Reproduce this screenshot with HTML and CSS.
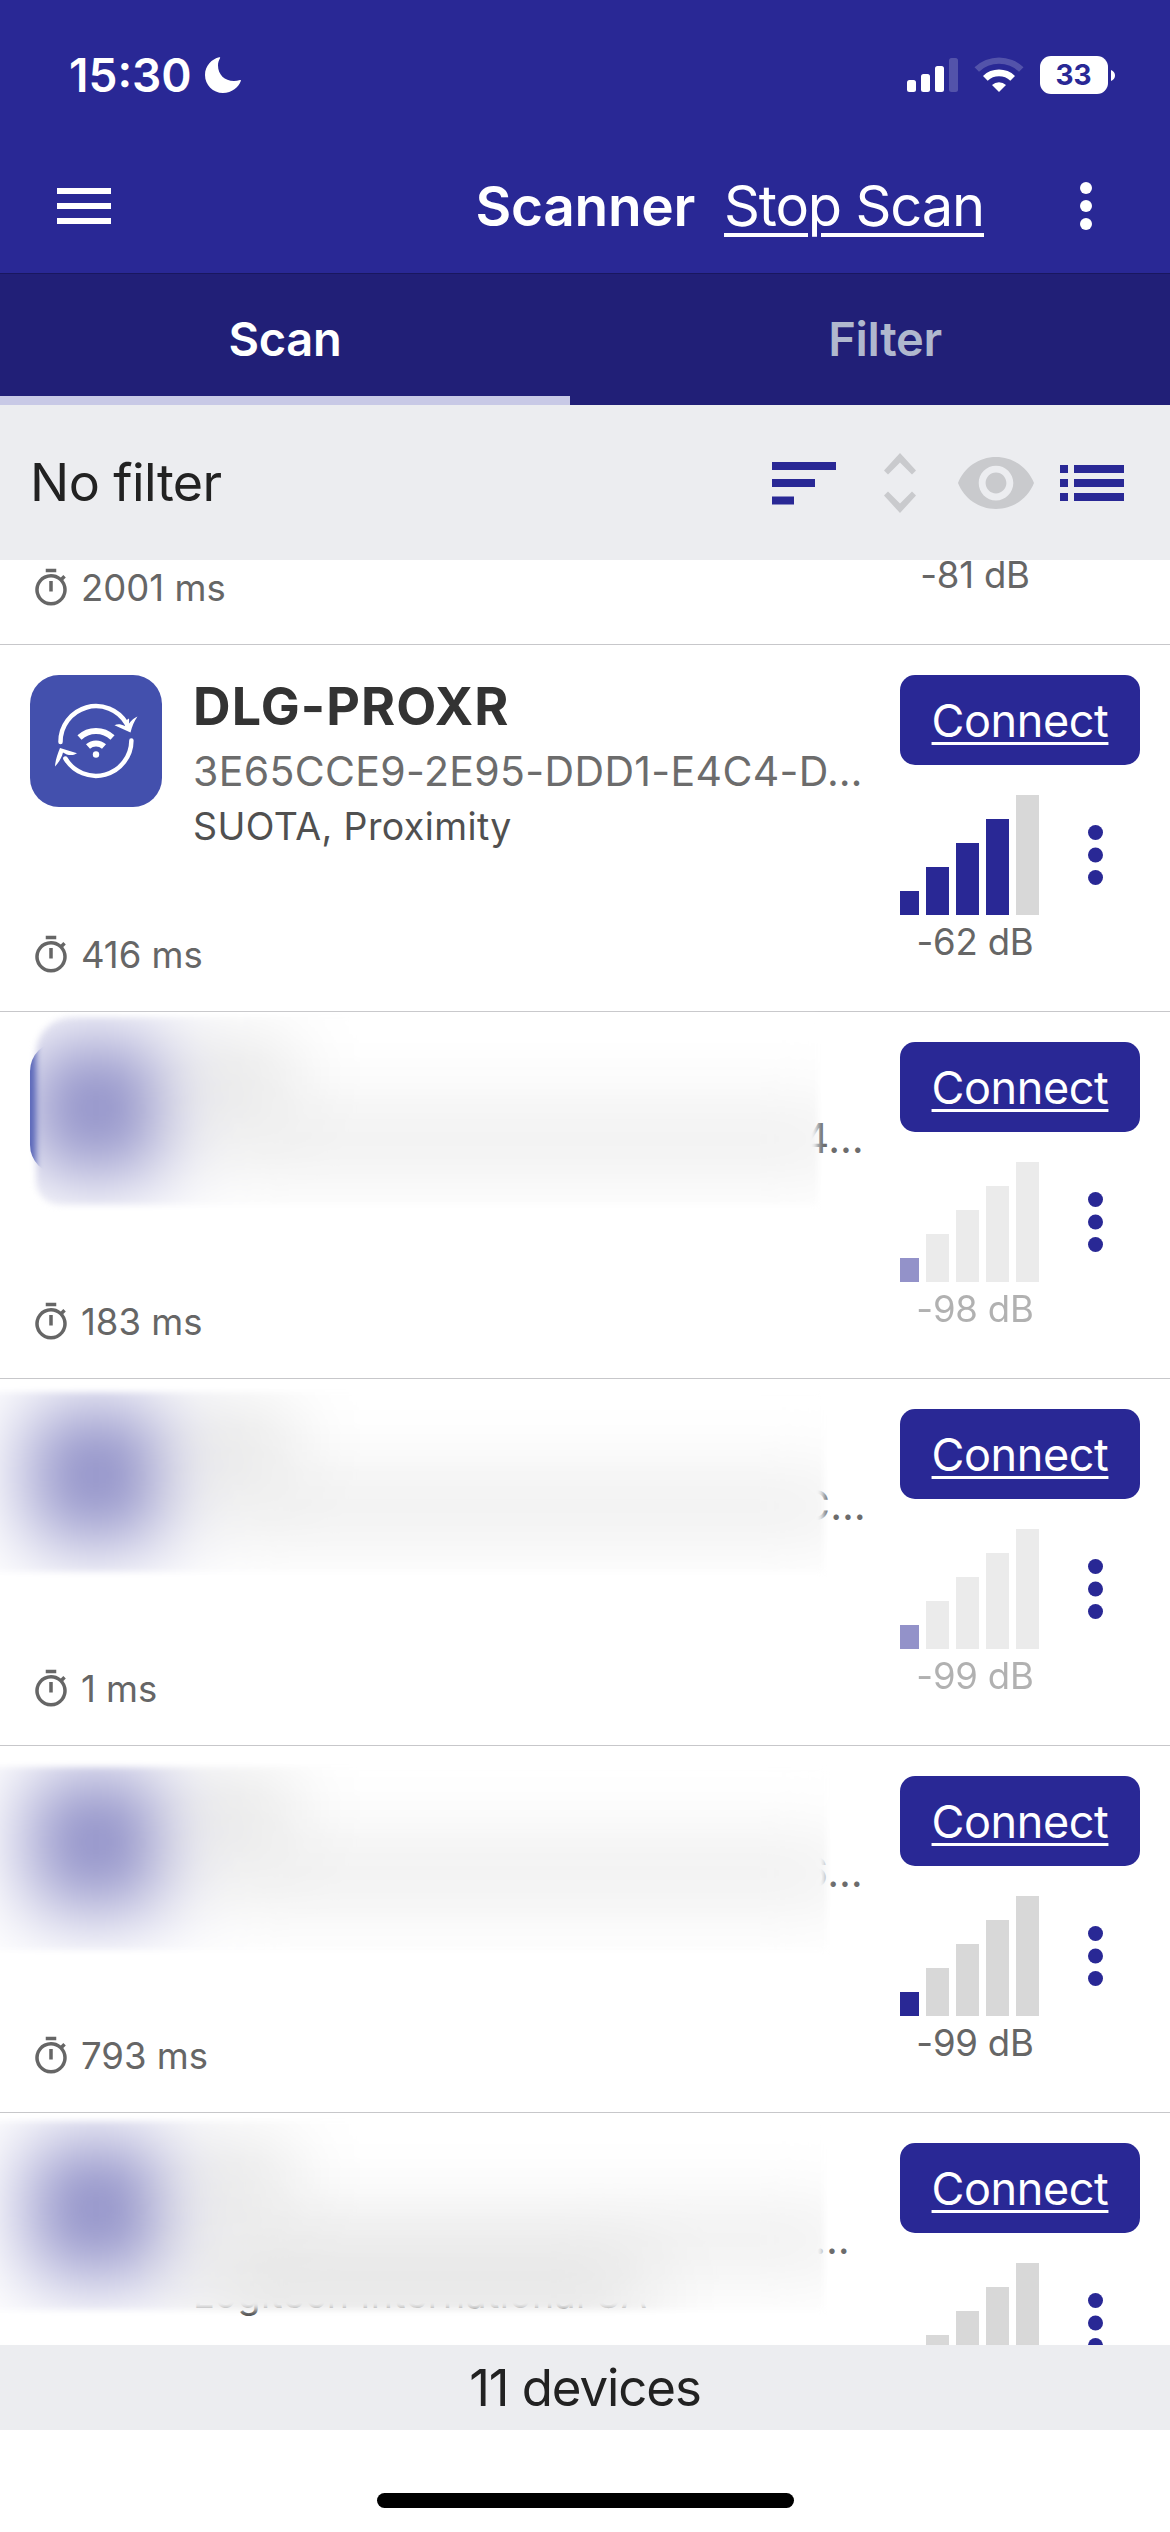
FILE: index.html
```html
<!DOCTYPE html>
<html lang="en">
<head>
<meta charset="utf-8">
<title>Scanner</title>
<link rel="stylesheet" href="styles.css">
</head>
<body>
<svg class="defs" aria-hidden="true">
  <symbol id="timer" viewBox="0 0 24 24"><path d="M15 1H9v2h6V1zm-4 13h2V8h-2v6zm8.03-6.61 1.42-1.42c-.43-.51-.9-.99-1.41-1.41l-1.42 1.42A8.96 8.96 0 0 0 12 4a9 9 0 1 0 7.03 3.39zM12 20a7 7 0 1 1 0-14 7 7 0 0 1 0 14z"/></symbol>
  <symbol id="more" viewBox="0 0 15 60"><circle cx="7.5" cy="7.5" r="7.5"/><circle cx="7.5" cy="30" r="7.5"/><circle cx="7.5" cy="52.5" r="7.5"/></symbol>
</svg>

<header class="header">
  <div class="status">
    <span class="time">15:30</span>
    <svg class="moon" viewBox="0 0 36 36"><path d="M14.2.3C7 2 0 8.500 0 18c0 10 8 18 18 18 9 0 15.500-5.500 17.900-12.200.2-.7-.2-1-.9-.8-2 .7-4 1-6 1-9.500 0-16-6.500-16-15.500 0-2.800.7-5.200 2-7.300.4-.7 0-1.100-.8-.9z"/></svg>
    <svg class="status-icons" viewBox="0 0 208 38">
      <rect x="0" y="24" width="9" height="12" rx="2.500"/><rect x="14" y="18" width="9" height="18" rx="2.500"/><rect x="28" y="10" width="9" height="26" rx="2.500"/><rect class="dim" x="42" y="2" width="9" height="34" rx="2.500"/>
      <path class="dim" d="M67.500 11.200a35.500 35.500 0 0 1 49 0l-4.500 4.600a29 29 0 0 0-40 0z"/>
      <path d="M76 19.900a23 23 0 0 1 32 0l-4.700 4.900a16.500 16.500 0 0 0-22.600 0z"/>
      <path d="M85 28.900a10.500 10.500 0 0 1 14 0L92 36z"/>
      <rect x="133" y="0" width="68" height="38" rx="11"/>
      <path d="M204 14c2.700 1 4 3 4 5.500s-1.300 4.500-4 5.500z"/>
      <text class="battery" x="166.500" y="29.300" text-anchor="middle">33</text>
    </svg>
  </div>
  <div class="appbar">
    <div class="menu"><i></i><i></i><i></i></div>
    <h1 class="title">Scanner</h1>
    <a class="stop">Stop Scan</a>
    <svg class="overflow" viewBox="0 0 12 48"><circle cx="6" cy="6" r="6"/><circle cx="6" cy="24" r="6"/><circle cx="6" cy="42" r="6"/></svg>
  </div>
</header>

<nav class="tabs">
  <div class="tab active">Scan</div>
  <div class="tab">Filter</div>
</nav>

<div class="toolbar">
  <span class="filter">No filter</span>
  <svg class="tools" viewBox="0 0 352 60">
    <path class="on" d="M0 9h64v8H0zM0 26h43v8H0zM0 43.500h22v8H0z"/>
    <path d="M128 0l16 17.500-4 4-12-12-12 12-4-4zM128 60l16-17.500-4-4-12 12-12-12-4 4z"/>
    <path d="M224 4c-17.300 0-32 10.800-38 26 6 15.200 20.700 26 38 26s32-10.800 38-26c-6-15.200-20.700-26-38-26zm0 43.500c-9.500 0-17.300-7.800-17.300-17.500s7.800-17.300 17.300-17.300 17.300 7.800 17.300 17.300-7.800 17.500-17.300 17.500zm0-28c-5.700 0-10.400 4.700-10.400 10.500s4.700 10.400 10.400 10.400 10.400-4.700 10.400-10.400-4.700-10.500-10.400-10.500z"/>
    <path class="on" d="M288 12h8v8h-8zm0 14h8v8h-8zm0 14h8v8h-8zM302 12h50v8h-50zm0 14h50v8h-50zm0 14h50v8h-50z"/>
  </svg>
</div>

<main class="list">
  <section class="device cut">
    <div class="timer"><svg><use href="#timer"/></svg><span>2001 ms</span></div>
    <div class="db">-81 dB</div>
  </section>

  <section class="device">
    <div class="info">
      <svg class="app" viewBox="0 0 132 132">
        <rect width="132" height="132" rx="29"/>
        <g class="line"><path d="M30.500 67a35.500 35.500 0 0 1 66-18.500"/><path d="M101.400 65.500a35.500 35.500 0 0 1-66 18"/></g>
        <path class="solid" d="M100.500 57.500 84.500 50.300c3-1.600 6-1.500 10.300.8.700-4.500 1.800-6.600 4.200-7.600.2 2 .2 3.400-.2 5.200 3-3.700 5.200-5.800 8.700-7.200-3.500 5-5.300 9.400-7 16zM30 73l17 5.200c-3.200 2-6.200 2.400-10.200 1.300l-3.800-2c-1.200 5-3.700 9.300-8 14C25.300 85.500 27.500 79 30 73z"/>
        <path class="arc" d="M49.500 62.500a24 24 0 0 1 33 0"/><path class="arc" d="M58 71.500a12 12 0 0 1 16 0"/><circle class="solid" cx="66" cy="79.500" r="3.200"/>
      </svg>
      <div class="texts">
        <div class="name">DLG-PROXR</div>
        <div class="ident">3E65CCE9-2E95-DDD1-E4C4-D…</div>
        <div class="services">SUOTA, Proximity</div>
      </div>
      <div class="timer"><svg><use href="#timer"/></svg><span>416 ms</span></div>
    </div>
    <div class="side">
      <a class="connect">Connect</a>
      <div class="bars l4"><i></i><i></i><i></i><i></i><i></i></div>
      <svg class="more"><use href="#more"/></svg>
      <div class="db">-62 dB</div>
    </div>
  </section>

  <section class="device r1">
    <div class="info">
      <svg class="app" viewBox="0 0 132 132"><rect width="132" height="132" rx="29"/></svg>
      <div class="texts"><div class="name"></div><div class="ident tail">4…</div></div>
      <div class="timer"><svg><use href="#timer"/></svg><span>183 ms</span></div>
    </div>
    <div class="side">
      <a class="connect">Connect</a>
      <div class="bars l1 stale"><i></i><i></i><i></i><i></i><i></i></div>
      <svg class="more"><use href="#more"/></svg>
      <div class="db stale">-98 dB</div>
    </div>
    <div class="veil"><div class="window"><i class="s-icon"></i><i class="s-name"></i><i class="s-id"></i></div></div>
  </section>

  <section class="device r2">
    <div class="info">
      <div class="app"></div>
      <div class="texts"><div class="name"></div><div class="ident tail">C…</div></div>
      <div class="timer"><svg><use href="#timer"/></svg><span>1 ms</span></div>
    </div>
    <div class="side">
      <a class="connect">Connect</a>
      <div class="bars l1 stale"><i></i><i></i><i></i><i></i><i></i></div>
      <svg class="more"><use href="#more"/></svg>
      <div class="db stale">-99 dB</div>
    </div>
    <div class="veil"><div class="window"><i class="s-icon"></i><i class="s-name"></i><i class="s-id"></i></div></div>
  </section>

  <section class="device r3">
    <div class="info">
      <div class="app"></div>
      <div class="texts"><div class="name"></div><div class="ident tail">6…</div></div>
      <div class="timer"><svg><use href="#timer"/></svg><span>793 ms</span></div>
    </div>
    <div class="side">
      <a class="connect">Connect</a>
      <div class="bars l1"><i></i><i></i><i></i><i></i><i></i></div>
      <svg class="more"><use href="#more"/></svg>
      <div class="db">-99 dB</div>
    </div>
    <div class="veil"><div class="window"><i class="s-icon"></i><i class="s-name"></i><i class="s-id"></i></div></div>
  </section>

  <section class="device r4">
    <div class="info">
      <div class="app"></div>
      <div class="texts"><div class="name"></div><div class="ident tail">…</div><div class="services">Logitech International SA</div></div>
    </div>
    <div class="side">
      <a class="connect">Connect</a>
      <div class="bars"><i></i><i></i><i></i><i></i><i></i></div>
      <svg class="more"><use href="#more"/></svg>
    </div>
    <div class="veil"><div class="window"><i class="s-icon"></i><i class="s-name"></i><i class="s-id"></i><i class="s-services"></i></div></div>
  </section>
</main>

<footer class="footer">11 devices</footer>
<div class="home"><i></i></div>
</body>
</html>
```
FILE: styles.css
```css
* { box-sizing: border-box; }
body { margin: 0; width: 1170px; height: 2532px; overflow: hidden; display: flex; flex-direction: column; background: #fff; color: #222; font-family: Inter, "Liberation Sans", sans-serif; }
.defs { display: none; }
i { display: block; }

.header { height: 273px; background: #292895; color: #fff; flex: none; }
.status { height: 139px; padding: 11px 55px 0 69px; display: flex; align-items: center; }
.time { width: 123px; font-size: 46px; font-weight: 600; line-height: 56px; }
.moon { width: 36px; height: 36px; margin-left: 13px; fill: #fff; }
.status-icons { width: 208px; height: 38px; margin-left: auto; fill: #fff; }
.status-icons .dim { opacity: .2; }
.status-icons .battery { font-size: 28px; font-weight: 700; fill: #292895; }
.appbar { height: 134px; padding: 0 78px 0 57px; display: flex; align-items: center; }
.menu { width: 54px; display: grid; gap: 9px; }
.menu i { height: 6px; background: #fff; }
.title { margin: 0 29px 0 auto; font-size: 55px; font-weight: 600; line-height: 68px; letter-spacing: -.3px; }
.stop { margin-right: 96px; font-size: 56px; line-height: 68px; letter-spacing: -1.15px; text-decoration: underline; text-decoration-thickness: 4px; text-underline-offset: 7px; }
.overflow { width: 12px; height: 48px; fill: #fff; }

.tabs { height: 132px; flex: none; display: grid; grid-template-columns: 570px 570px; gap: 30px; background: #211f77; border-top: 1px solid #19175f; }
.tab { display: flex; align-items: center; justify-content: center; font-size: 47px; font-weight: 600; letter-spacing: -.3px; color: #b0b8ce; border-bottom: 9px solid transparent; padding-top: 7px; }
.tab.active { color: #fff; border-color: #c8c9e6; }

.toolbar { height: 155px; flex: none; padding: 0 46px 0 30px; display: flex; align-items: center; justify-content: space-between; background: #ecedf0; }
.filter { font-size: 52px; line-height: 60px; letter-spacing: -.55px; }
.tools { width: 352px; height: 60px; fill: #c9cacd; }
.tools .on { fill: #292895; }

.list { height: 1785px; flex: none; overflow: hidden; }
.device { position: relative; height: 367px; padding: 30px 30px 0; display: flex; justify-content: space-between; border-bottom: 1px solid #c7c7ca; }
.device.cut { height: 85px; padding-top: 0; }
.device.cut .timer { margin-top: 5px; }
.device.cut .db { height: 31px; line-height: 31px; margin: 0 90px 0 0; }
.info { width: 835px; height: 302px; display: grid; grid-template-columns: 132px 1fr; grid-template-rows: 1fr 45px; column-gap: 31px; }
.app { width: 132px; height: 132px; fill: #4350ad; }
.app .line { fill: none; stroke: #fff; stroke-width: 4.500px; stroke-linecap: round; }
.app .arc { fill: none; stroke: #fff; stroke-width: 6px; }
.app .solid { fill: #fff; }
.texts { white-space: nowrap; }
.name { height: 64px; font-size: 52px; line-height: 64px; font-weight: 700; letter-spacing: 1.1px; color: #333; }
.ident { height: 65px; font-size: 41px; line-height: 65px; letter-spacing: .35px; color: #6c6c6c; }
.ident.tail { text-align: right; }
.r1 .tail { padding-right: 1px; }
.r2 .tail { margin-right: -1px; }
.r3 .tail { padding-right: 2px; }
.r4 .tail { padding-right: 15px; }
.services { font-size: 37.500px; line-height: 45px; letter-spacing: .4px; color: #505050; }
.timer { grid-column: 1 / 3; height: 45px; display: flex; align-items: center; gap: 9px; font-size: 36.500px; color: #666; fill: #666; }
.timer svg { width: 42px; height: 42px; }

.side { width: 240px; height: 295px; display: grid; grid-template-columns: 150px 90px; grid-template-rows: 90px 120px 55px; row-gap: 30px; }
.connect { grid-column: 1 / 3; display: flex; align-items: center; justify-content: center; border-radius: 15px; background: #292895; color: #fff; font-size: 45px; letter-spacing: -.4px; text-decoration: underline; text-decoration-thickness: 3px; text-underline-offset: 5px; }
.bars { display: flex; align-items: flex-end; gap: 7px; }
.bars i { width: 23px; background: #d8d8d8; }
.bars i:nth-child(1) { width: 19px; height: 24px; }
.bars i:nth-child(2) { height: 48px; }
.bars i:nth-child(3) { height: 72px; }
.bars i:nth-child(4) { height: 96px; }
.bars i:nth-child(5) { height: 120px; }
.bars.l1 i:nth-child(1), .bars.l4 i:nth-child(-n+4) { background: #292895; }
.r4 .bars i:nth-child(1) { visibility: hidden; }
.more { width: 15px; height: 60px; align-self: center; justify-self: center; fill: #292895; }
.db { width: 150px; margin-top: -30px; line-height: 55px; text-align: center; font-size: 36.500px; letter-spacing: -.2px; color: #666; }
.stale { opacity: .5; }

/* Frosted cover over private device details */
.veil { position: absolute; inset: 0; filter: blur(3px); }
.window { position: absolute; inset: 0 0 0 -20px; background: #fff; }
.window i { position: absolute; filter: blur(40px); }
.s-icon { left: 50px; top: 30px; width: 132px; height: 132px; background: #8989c4; }
.s-name { left: 215px; top: 43px; width: 90px; height: 38px; background: #cacaca; }
.s-id { left: 215px; top: 111px; width: 660px; height: 32px; background: #dadada; }
.s-services { left: 215px; top: 166px; width: 450px; height: 32px; background: #c8c8c8; }
.r1 .window { clip-path: inset(5px 352px 173px 56px round 36px 0 0 24px); }
.r2 .window { clip-path: inset(13px 346px 173px 0); }
.r3 .window { clip-path: inset(21px 343px 162px 0); }
.r4 .window { clip-path: inset(8px 346px 169px 0); }
.r1 .app { fill: #5c69ba; }

.footer { height: 85px; flex: none; display: flex; align-items: center; justify-content: center; background: #ecedf0; font-size: 51px; letter-spacing: -1.1px; }
.home { padding-top: 63px; display: flex; justify-content: center; }
.home i { width: 417px; height: 15px; border-radius: 8px; background: #000; }
```
